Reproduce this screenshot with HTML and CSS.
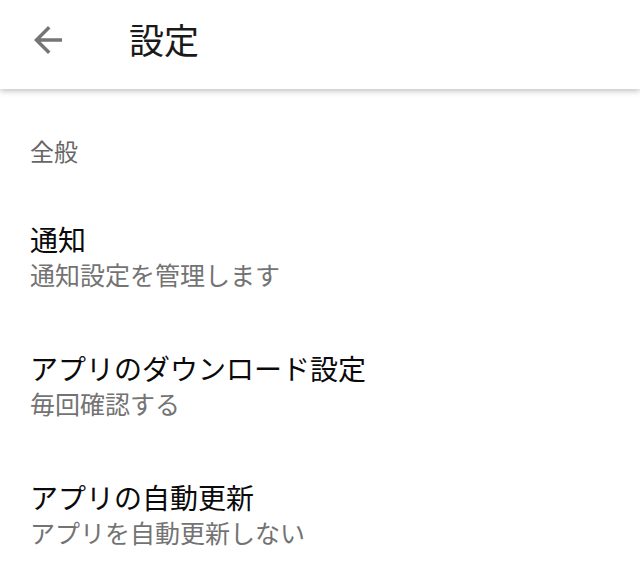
FILE: index.html
```html
<!DOCTYPE html>
<html lang="ja">
<head>
  <meta charset="UTF-8">
  <meta name="viewport" content="width=device-width, initial-scale=1.0">
  <title>設定</title>
  <link rel="stylesheet" href="styles.css">
</head>
<body>
  <div class="app-bar">
    <button class="back-btn" aria-label="戻る">
      <svg viewBox="0 0 24 24" width="42" height="42"><path d="M20 11H7.83l5.59-5.59L12 4l-8 8 8 8 1.41-1.41L7.83 13H20v-2z"/></svg>
    </button>
    <h1 class="app-title">設定</h1>
  </div>

  <div class="settings">
    <div class="section-label">全般</div>
    <div class="setting-item">
      <div class="setting-title">通知</div>
      <div class="setting-sub">通知設定を管理します</div>
    </div>
    <div class="setting-item">
      <div class="setting-title">アプリのダウンロード設定</div>
      <div class="setting-sub">毎回確認する</div>
    </div>
    <div class="setting-item">
      <div class="setting-title">アプリの自動更新</div>
      <div class="setting-sub">アプリを自動更新しない</div>
    </div>
  </div>
</body>
</html>
```

FILE: styles.css
```css
body { margin: 0; background: #fff; font-family: "Noto Sans CJK JP", "Noto Sans", sans-serif; }
.app-bar { display: flex; align-items: center; height: 89px; padding-left: 27px; background: #fff; box-shadow: 0 2px 6px rgba(0,0,0,0.25); position: relative; }
.back-btn { display: flex; background: none; border: none; padding: 0; margin-top: -9px; cursor: pointer; }
.back-btn svg { fill: #757575; }
.app-title { margin: -12px 0 0 60px; font-size: 35px; font-weight: 400; color: #1a1a1a; line-height: 1; }
.settings { padding-top: 45px; }
.section-label { padding: 0 30px; font-size: 24px; line-height: 34px; color: #666; }
.setting-item { padding: 30px 30px 29px; }
.section-label + .setting-item { margin-top: 23px; }
.setting-title { font-size: 28px; line-height: 36px; color: #0a0a0a; }
.setting-sub { font-size: 25px; line-height: 34px; color: #737373; }
```
